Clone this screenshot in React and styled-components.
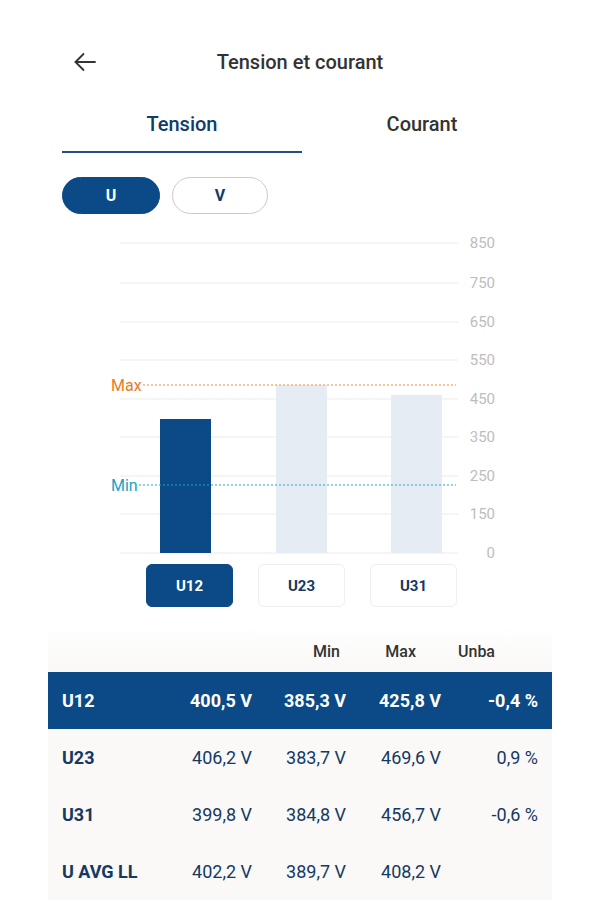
import React, { useState } from 'react';
import styled, { createGlobalStyle } from 'styled-components';

const NAVY = '#0c4a87';
const INK = '#143a63';

const ticks = [
	{ label: '850', y: 13 },
	{ label: '750', y: 53 },
	{ label: '650', y: 92 },
	{ label: '550', y: 130 },
	{ label: '450', y: 169 },
	{ label: '350', y: 207 },
	{ label: '250', y: 246 },
	{ label: '150', y: 284 },
	{ label: '0', y: 323 },
];

const bars = [
	{ id: 'U12', x: 160, top: 189 },
	{ id: 'U23', x: 276, top: 155 },
	{ id: 'U31', x: 391, top: 165 },
];

const rows = [
	{ name: 'U12', values: ['400,5 V', '385,3 V', '425,8 V', '-0,4 %'] },
	{ name: 'U23', values: ['406,2 V', '383,7 V', '469,6 V', '0,9 %'] },
	{ name: 'U31', values: ['399,8 V', '384,8 V', '456,7 V', '-0,6 %'] },
	{ name: 'U AVG LL', values: ['402,2 V', '389,7 V', '408,2 V', ''] },
];

const GlobalStyle = createGlobalStyle`
	body {
		margin: 0;
		background: #fff;
		font-family: Roboto, 'Liberation Sans', sans-serif;
	}
`;

const BackIcon = () => (
	<svg width='26' height='26' viewBox='0 0 26 26' fill='none' stroke='#333' strokeWidth='1.8' strokeLinecap='round' strokeLinejoin='round'>
		<path d='M23 13H3.5' />
		<path d='M11.5 5L3.5 13l8 8' />
	</svg>
);

const Chart = ({ active }) => (
	<ChartSvg viewBox='0 0 600 334' width='600' height='334'>
		{ticks.map((t) => (
			<g key={t.label}>
				<line x1='120' x2='458' y1={t.y} y2={t.y} stroke='#ebebeb' strokeWidth='1' />
				<text x='495' y={t.y + 5} textAnchor='end' fontSize='15' fill='#bdbdbd'>
					{t.label}
				</text>
			</g>
		))}
		{bars.map((b) => (
			<rect key={b.id} x={b.x} y={b.top} width='51' height={323 - b.top} fill={b.id === active ? NAVY : '#e5ecf3'} />
		))}
		<line x1='143' x2='456' y1='155' y2='155' stroke='#f08a3c' strokeWidth='1.2' strokeDasharray='2 2' />
		<text x='111' y='161' fontSize='16' fill='#ee7a22'>Max</text>
		<line x1='139' x2='456' y1='255' y2='255' stroke='#1aa7c9' strokeWidth='1.2' strokeDasharray='2 2' />
		<text x='111' y='261' fontSize='16' fill='#17a3c6'>Min</text>
	</ChartSvg>
);

const App = () => {
	const [tab, setTab] = useState('Tension');
	const [mode, setMode] = useState('U');
	const [phase, setPhase] = useState('U12');

	return (
		<Page>
			<GlobalStyle />
			<TopBar>
				<BackButton>
					<BackIcon />
				</BackButton>
				<Title>Tension et courant</Title>
			</TopBar>
			<Tabs>
				{['Tension', 'Courant'].map((t) => (
					<Tab key={t} active={tab === t} onClick={() => setTab(t)}>
						{t}
					</Tab>
				))}
			</Tabs>
			<Pills>
				{['U', 'V'].map((m) => (
					<Pill key={m} active={mode === m} onClick={() => setMode(m)}>
						{m}
					</Pill>
				))}
			</Pills>
			<Chart active={phase} />
			<PhaseRow>
				{bars.map((b) => (
					<PhaseButton key={b.id} active={phase === b.id} onClick={() => setPhase(b.id)}>
						{b.id}
					</PhaseButton>
				))}
			</PhaseRow>
			<Table>
				<HeadRow>
					<span />
					<span />
					<HeadCell align='right' pad='0 6px 0 0'>Min</HeadCell>
					<HeadCell align='right' pad='0 25px 0 0'>Max</HeadCell>
					<HeadCell align='left' pad='0 0 0 17px'>Unba</HeadCell>
				</HeadRow>
				{rows.map((r) => (
					<Row key={r.name} active={phase === r.name}>
						<Name>{r.name}</Name>
						{r.values.map((v, i) => (
							<Value key={i}>{v}</Value>
						))}
					</Row>
				))}
			</Table>
		</Page>
	);
};

const Page = styled.div`
	width: 600px;
	height: 900px;
	overflow: hidden;
	background: #fff;
`;
const TopBar = styled.div`
	position: relative;
	height: 44px;
	margin-top: 40px;
	display: flex;
	align-items: center;
	justify-content: center;
`;
const BackButton = styled.div`
	position: absolute;
	left: 72px;
	top: 9px;
	display: flex;
`;
const Title = styled.h1`
	margin: 0;
	font-size: 20px;
	font-weight: 500;
	color: #333;
`;
const Tabs = styled.div`
	display: flex;
	margin: 13px 0 0 62px;
	width: 480px;
`;
const Tab = styled.div`
	flex: 1;
	height: 54px;
	display: flex;
	align-items: center;
	justify-content: center;
	font-size: 20px;
	font-weight: 500;
	color: ${(p) => (p.active ? '#0f3c6b' : '#333')};
	border-bottom: 2px solid ${(p) => (p.active ? '#22507f' : 'transparent')};
	cursor: pointer;
`;
const Pills = styled.div`
	display: flex;
	gap: 12px;
	margin: 24px 0 0 62px;
`;
const Pill = styled.div`
	width: ${(p) => (p.active ? '98px' : '96px')};
	height: 37px;
	box-sizing: border-box;
	border-radius: 19px;
	display: flex;
	align-items: center;
	justify-content: center;
	font-size: 16px;
	font-weight: 700;
	background: ${(p) => (p.active ? NAVY : '#fff')};
	color: ${(p) => (p.active ? '#fff' : INK)};
	border: 1px solid ${(p) => (p.active ? NAVY : '#cfc9c6')};
	cursor: pointer;
`;
const ChartSvg = styled.svg`
	display: block;
	margin-top: 16px;
	font-family: Roboto, 'Liberation Sans', sans-serif;
`;
const PhaseRow = styled.div`
	display: flex;
	gap: 25px;
	margin: 0 0 0 146px;
`;
const PhaseButton = styled.div`
	width: 87px;
	height: 43px;
	box-sizing: border-box;
	border-radius: 6px;
	display: flex;
	align-items: center;
	justify-content: center;
	font-size: 15px;
	font-weight: 700;
	background: ${(p) => (p.active ? NAVY : '#fff')};
	color: ${(p) => (p.active ? '#fff' : INK)};
	border: 1px solid ${(p) => (p.active ? NAVY : '#efefef')};
	cursor: pointer;
`;
const Table = styled.div`
	margin: 18px 48px 0;
	background: linear-gradient(#fff, #faf9f7 40px);
`;
const grid = `
	display: grid;
	grid-template-columns: 98px 92px 94px 95px 97px;
	padding: 0 14px;
	align-items: center;
`;
const HeadRow = styled.div`
	${grid}
	height: 47px;
	align-items: end;
	padding-bottom: 11px;
	box-sizing: border-box;
	font-size: 16px;
	font-weight: 500;
	color: #333;
`;
const HeadCell = styled.span`
	text-align: ${(p) => p.align};
	padding: ${(p) => p.pad};
	line-height: 18px;
`;
const Row = styled.div`
	${grid}
	height: 57px;
	font-size: 18px;
	background: ${(p) => (p.active ? NAVY : 'transparent')};
	color: ${(p) => (p.active ? '#fff' : INK)};
	font-weight: ${(p) => (p.active ? 700 : 400)};
	&:first-of-type {
		height: 56px;
	}
`;
const Name = styled.span`
	font-weight: 700;
`;
const Value = styled.span`
	text-align: right;
	white-space: nowrap;
`;

export default App;
